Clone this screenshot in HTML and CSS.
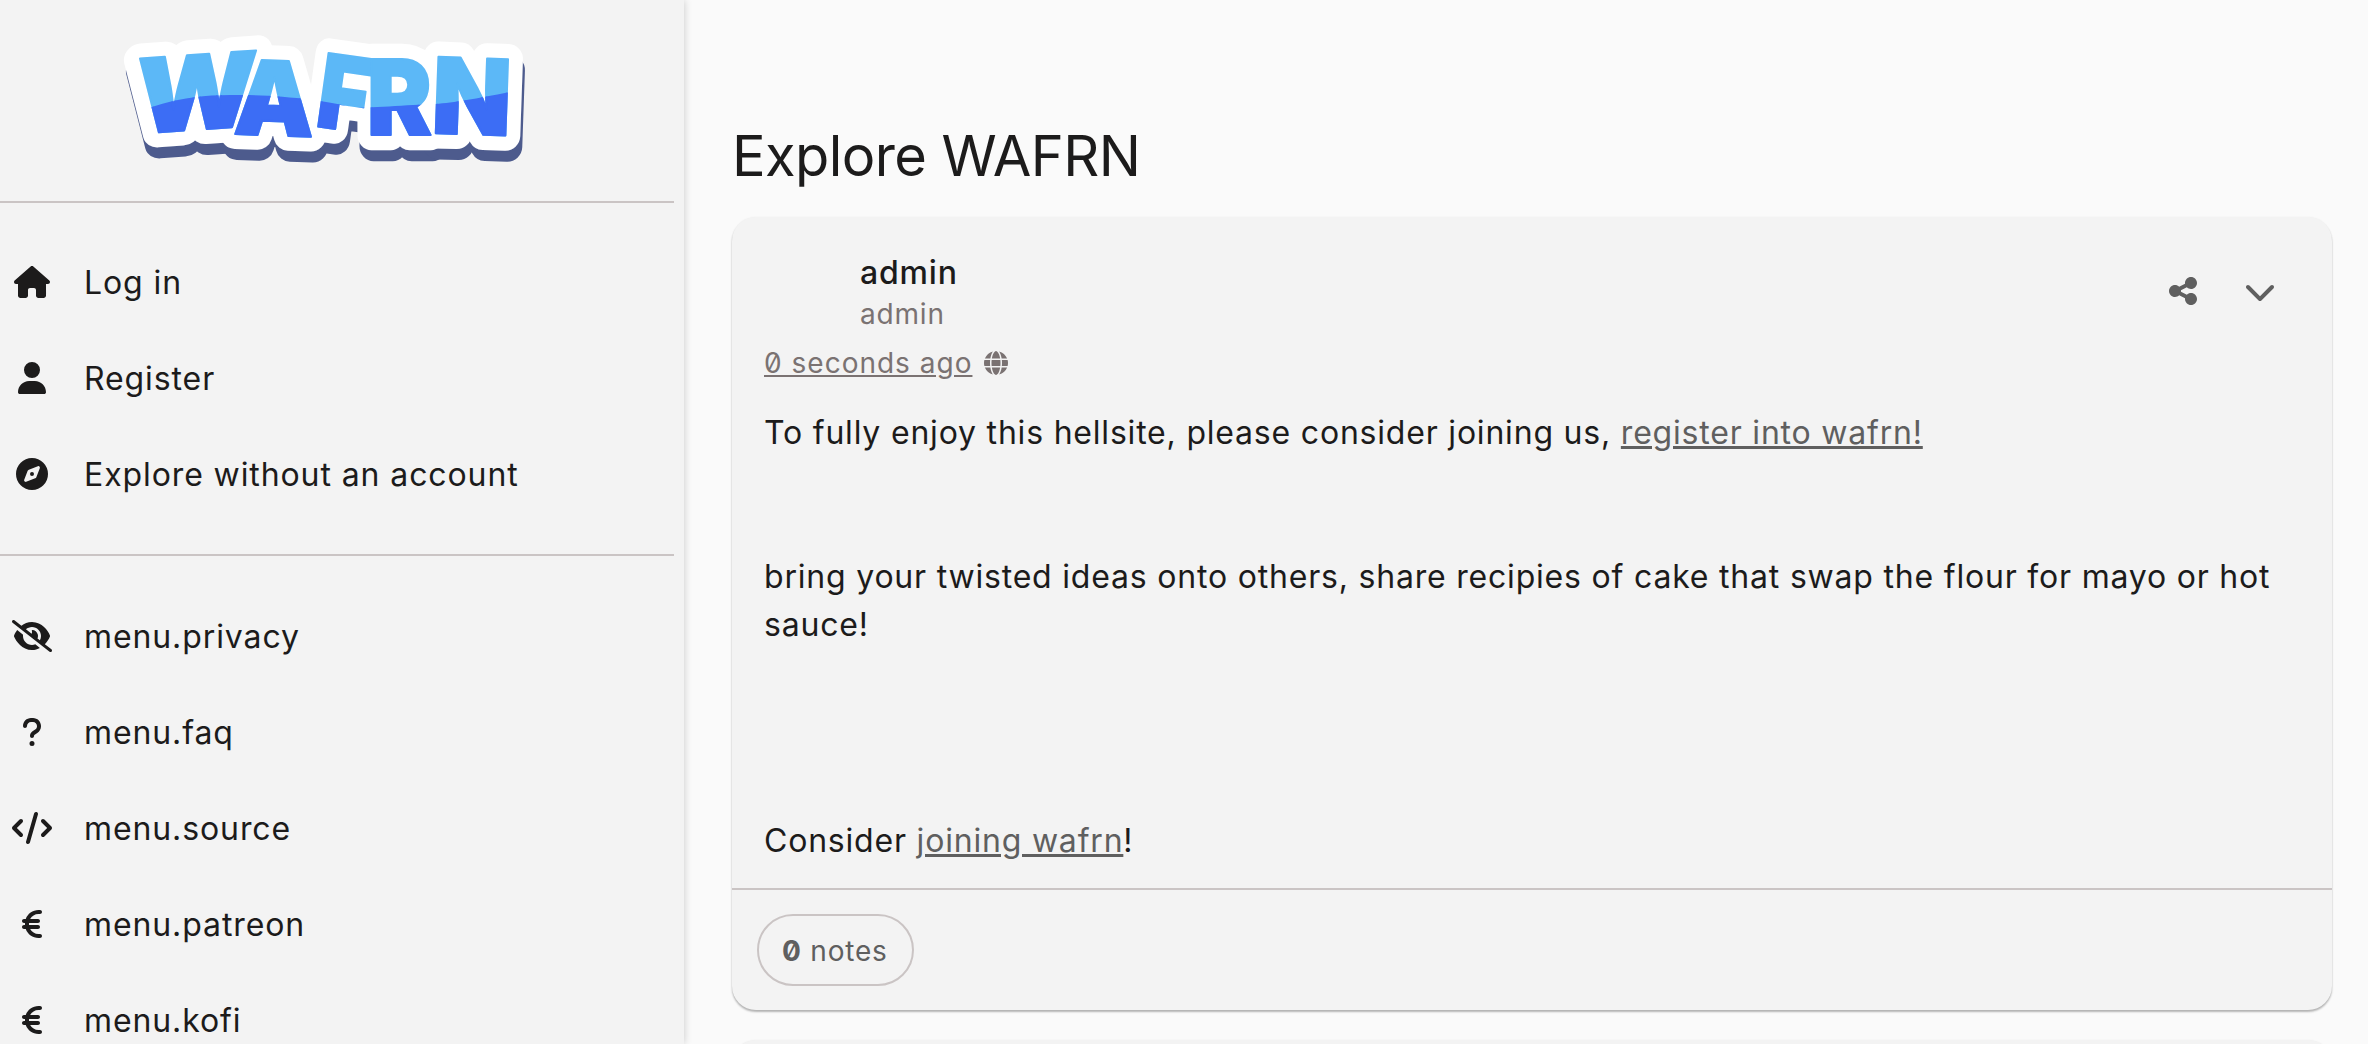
FILE: index.html
```html
<!DOCTYPE html>
<html lang="en">
<head>
    <meta charset="UTF-8">
    <title>Explore WAFRN</title>
    <link rel="stylesheet" href="styles.css">
</head>
<body>
    <aside class="sidebar">
        <div class="logo">
            <svg class="logo-art" viewBox="0 0 430 150" width="430" height="150" role="img" aria-label="WAFRN">
                <defs>
                    <g id="logoLetters">
                        <text transform="translate(25 114) rotate(-4) skewX(-6) scale(1.12 1.03)">W</text>
                        <text transform="translate(123 114) rotate(2) scale(1.01 1.03)">A</text>
                        <text transform="translate(204 106) rotate(8) scale(.88 1.02)">F</text>
                        <text transform="translate(257 115) scale(.97 1.05)">R</text>
                        <text transform="translate(321 113) rotate(2) scale(1.03 1.05)">N</text>
                    </g>
                    <clipPath id="logoWave">
                        <path d="M0 106 C30 88 70 75 120 75 C160 74 220 80 243 88 C255 88 300 85 325 84 C350 82 375 77 430 66 V150 H0 Z"/>
                    </clipPath>
                </defs>
                <use href="#logoLetters" class="logo-shadow" transform="translate(2 11)"/>
                <use href="#logoLetters" class="logo-outline"/>
                <use href="#logoLetters" class="logo-light"/>
                <g clip-path="url(#logoWave)">
                    <use href="#logoLetters" class="logo-dark"/>
                </g>
            </svg>
        </div>

        <nav class="nav-group">
            <a class="nav-item">
                <span class="nav-icon"><svg class="icon" viewBox="0 0 576 512"><path d="M575.8 255.5c0 18-15 32.1-32 32.1h-32l.7 160.2c0 2.7-.2 5.4-.5 8.1V472c0 22.1-17.9 40-40 40H456c-1.1 0-2.2 0-3.3-.1c-1.4 .1-2.8 .1-4.2 .1H416 392c-22.1 0-40-17.9-40-40V448 384c0-17.7-14.3-32-32-32H256c-17.7 0-32 14.3-32 32v64 24c0 22.1-17.9 40-40 40H160 128.1c-1.5 0-3-.1-4.5-.2c-1.2 .1-2.4 .2-3.6 .2H104c-22.1 0-40-17.9-40-40V360c0-.9 0-1.9 .1-2.8V287.6H32c-18 0-32-14-32-32.1c0-9 3-17 10-24L266.4 8c7-7 15-8 22-8s15 2 21 7L564.8 231.5c8 7 12 15 11 24z"/></svg></span>
                <span>Log in</span>
            </a>
            <a class="nav-item">
                <span class="nav-icon"><svg class="icon" viewBox="0 0 448 512"><path d="M224 256A128 128 0 1 0 224 0a128 128 0 1 0 0 256zm-45.7 48C79.8 304 0 383.8 0 482.3C0 498.7 13.3 512 29.7 512H418.3c16.4 0 29.7-13.3 29.7-29.7C448 383.8 368.2 304 269.7 304H178.3z"/></svg></span>
                <span>Register</span>
            </a>
            <a class="nav-item">
                <span class="nav-icon"><svg class="icon" viewBox="0 0 512 512"><path d="M256 512A256 256 0 1 0 256 0a256 256 0 1 0 0 512zm50.7-186.9L162.4 380.6c-19.4 7.5-38.5-11.6-31-31l55.5-144.3c3.3-8.5 9.9-15.1 18.4-18.4l144.3-55.5c19.4-7.5 38.5 11.6 31 31L325.1 306.7c-3.2 8.5-9.9 15.1-18.4 18.4zM288 256a32 32 0 1 0 -64 0 32 32 0 1 0 64 0z"/></svg></span>
                <span>Explore without an account</span>
            </a>
        </nav>

        <nav class="nav-group">
            <a class="nav-item">
                <span class="nav-icon"><svg class="icon" viewBox="0 0 640 512"><path d="M38.8 5.1C28.4-3.1 13.3-1.2 5.1 9.2S-1.2 34.7 9.2 42.9l592 464c10.4 8.2 25.5 6.3 33.7-4.1s6.3-25.5-4.1-33.7L525.6 386.7c39.6-40.6 66.4-86.1 79.9-118.4c3.3-7.9 3.3-16.7 0-24.6c-14.9-35.7-46.2-87.7-93-131.1C465.5 68.8 400.8 32 320 32c-68.2 0-125 26.3-169.3 60.8L38.8 5.1zM223.1 149.5C248.6 126.2 282.7 112 320 112c79.5 0 144 64.5 144 144c0 24.9-6.3 48.3-17.4 68.7L408 294.5c8.4-19.3 10.6-41.4 4.8-63.3c-11.1-41.5-47.8-69.4-88.6-71.1c-5.8-.2-9.2 6.1-7.4 11.7c2.1 6.4 3.3 13.2 3.3 20.3c0 10.2-2.4 19.8-6.6 28.3l-90.3-70.8zM373 389.9c-16.4 6.5-34.3 10.1-53 10.1c-79.5 0-144-64.5-144-144c0-6.9 .5-13.6 1.4-20.2L83.1 161.5C60.3 191.2 44 220.8 34.5 243.7c-3.3 7.9-3.3 16.7 0 24.6c14.9 35.7 46.2 87.7 93 131.1C174.5 443.2 239.2 480 320 480c47.8 0 89.9-12.9 126.2-32.5L373 389.9z"/></svg></span>
                <span>menu.privacy</span>
            </a>
            <a class="nav-item">
                <span class="nav-icon"><svg class="icon" viewBox="0 0 320 512"><path d="M80 160c0-35.3 28.7-64 64-64h32c35.3 0 64 28.7 64 64v3.6c0 21.8-11.1 42.1-29.4 53.8l-42.2 27.1c-25.2 16.2-40.4 44.1-40.4 74V320c0 17.7 14.3 32 32 32s32-14.3 32-32v-1.4c0-8.2 4.2-15.8 11-20.2l42.2-27.1c36.6-23.6 58.8-64.1 58.8-107.7V160c0-70.7-57.3-128-128-128H144C73.3 32 16 89.3 16 160c0 17.7 14.3 32 32 32s32-14.3 32-32zm80 320a40 40 0 1 0 0-80 40 40 0 1 0 0 80z"/></svg></span>
                <span>menu.faq</span>
            </a>
            <a class="nav-item">
                <span class="nav-icon"><svg class="icon" viewBox="0 0 640 512"><path d="M392.8 1.2c-17-4.9-34.7 5-39.6 22l-128 448c-4.9 17 5 34.7 22 39.6s34.7-5 39.6-22l128-448c4.9-17-5-34.7-22-39.6zm80.6 120.1c-12.5 12.5-12.5 32.8 0 45.3L562.7 256l-89.4 89.4c-12.5 12.5-12.5 32.8 0 45.3s32.8 12.5 45.3 0l112-112c12.5-12.5 12.5-32.8 0-45.3l-112-112c-12.5-12.5-32.8-12.5-45.3 0zm-306.7 0c-12.5-12.5-32.8-12.5-45.3 0l-112 112c-12.5 12.5-12.5 32.8 0 45.3l112 112c12.5 12.5 32.8 12.5 45.3 0s12.5-32.8 0-45.3L77.3 256l89.4-89.4c12.5-12.5 12.5-32.8 0-45.3z"/></svg></span>
                <span>menu.source</span>
            </a>
            <a class="nav-item">
                <span class="nav-icon"><svg class="icon" viewBox="0 0 320 512"><path d="M48.1 240c-.1 2.7-.1 5.3-.1 8v16c0 2.7 0 5.3 .1 8H32c-17.7 0-32 14.3-32 32s14.3 32 32 32H60.3C89.9 419.9 170 480 264 480h24c17.7 0 32-14.3 32-32s-14.3-32-32-32H264c-57.9 0-108.2-32.4-133.9-80H256c17.7 0 32-14.3 32-32s-14.3-32-32-32H112.2c-.1-2.6-.2-5.3-.2-8V248c0-2.7 .1-5.4 .2-8H256c17.7 0 32-14.3 32-32s-14.3-32-32-32H130.1c25.7-47.6 76-80 133.9-80h24c17.7 0 32-14.3 32-32s-14.3-32-32-32H264C170 32 89.9 92.1 60.3 176H32c-17.7 0-32 14.3-32 32s14.3 32 32 32H48.1z"/></svg></span>
                <span>menu.patreon</span>
            </a>
            <a class="nav-item">
                <span class="nav-icon"><svg class="icon" viewBox="0 0 320 512"><path d="M48.1 240c-.1 2.7-.1 5.3-.1 8v16c0 2.7 0 5.3 .1 8H32c-17.7 0-32 14.3-32 32s14.3 32 32 32H60.3C89.9 419.9 170 480 264 480h24c17.7 0 32-14.3 32-32s-14.3-32-32-32H264c-57.9 0-108.2-32.4-133.9-80H256c17.7 0 32-14.3 32-32s-14.3-32-32-32H112.2c-.1-2.6-.2-5.3-.2-8V248c0-2.7 .1-5.4 .2-8H256c17.7 0 32-14.3 32-32s-14.3-32-32-32H130.1c25.7-47.6 76-80 133.9-80h24c17.7 0 32-14.3 32-32s-14.3-32-32-32H264C170 32 89.9 92.1 60.3 176H32c-17.7 0-32 14.3-32 32s14.3 32 32 32H48.1z"/></svg></span>
                <span>menu.kofi</span>
            </a>
        </nav>
    </aside>

    <main class="content">
        <h1 class="page-title">Explore WAFRN</h1>

        <article class="post">
            <header class="post-header">
                <div class="post-author">
                    <div class="author-name">admin</div>
                    <div class="author-handle">admin</div>
                </div>
                <div class="post-actions">
                    <svg class="action-icon" viewBox="0 0 448 512"><path d="M352 224c53 0 96-43 96-96s-43-96-96-96s-96 43-96 96c0 4 .2 8 .7 11.9l-94.1 47C145.4 170.2 121.9 160 96 160c-53 0-96 43-96 96s43 96 96 96c25.9 0 49.4-10.2 66.6-26.9l94.1 47c-.5 3.9-.7 7.8-.7 11.9c0 53 43 96 96 96s96-43 96-96s-43-96-96-96c-25.9 0-49.4 10.2-66.6 26.9l-94.1-47c.5-3.9 .7-7.8 .7-11.9s-.2-8-.7-11.9l94.1-47C302.6 213.8 326.1 224 352 224z"/></svg>
                    <svg class="action-icon" viewBox="0 0 512 512"><path d="M233.4 406.6c12.5 12.5 32.8 12.5 45.3 0l192-192c12.5-12.5 12.5-32.8 0-45.3s-32.8-12.5-45.3 0L256 338.7 86.6 169.4c-12.5-12.5-32.8-12.5-45.3 0s-12.5 32.8 0 45.3l192 192z"/></svg>
                </div>
            </header>

            <div class="post-time">
                <a class="time-link">0 seconds ago</a>
                <svg class="globe-icon" viewBox="0 0 512 512"><path d="M352 256c0 22.2-1.2 43.6-3.3 64H163.3c-2.2-20.4-3.3-41.8-3.3-64s1.2-43.6 3.3-64H348.7c2.2 20.4 3.3 41.8 3.3 64zm28.8-64H503.9c5.3 20.5 8.1 41.9 8.1 64s-2.8 43.5-8.1 64H380.8c2.1-20.6 3.2-42 3.2-64s-1.1-43.4-3.2-64zm112.6-32H376.7c-10-63.9-29.8-117.4-55.3-151.6c78.3 20.7 142 77.5 171.9 151.6zm-149.1 0H167.7c6.1-36.4 15.5-68.6 27-94.7c10.5-23.6 22.2-40.7 33.5-51.5C239.4 3.2 248.7 0 256 0s16.6 3.2 27.8 13.8c11.3 10.8 23 27.9 33.5 51.5c11.6 26 20.9 58.2 27 94.7zm-209 0H18.6C48.6 85.9 112.2 29.1 190.6 8.4C165.1 42.6 145.3 96.1 135.3 160zM8.1 192H131.2c-2.1 20.6-3.2 42-3.2 64s1.1 43.4 3.2 64H8.1C2.8 299.5 0 278.1 0 256s2.8-43.5 8.1-64zM194.7 446.6c-11.6-26-20.9-58.2-27-94.6H344.3c-6.1 36.4-15.5 68.6-27 94.6c-10.5 23.6-22.2 40.7-33.5 51.5C272.6 508.8 263.3 512 256 512s-16.6-3.2-27.8-13.8c-11.3-10.8-23-27.9-33.5-51.5zM135.3 352c10 63.9 29.8 117.4 55.3 151.6C112.2 482.9 48.6 426.1 18.6 352H135.3zm358.1 0c-30 74.1-93.6 130.9-171.9 151.6c25.5-34.2 45.2-87.7 55.3-151.6H493.4z"/></svg>
            </div>

            <div class="post-body">
                <p>To fully enjoy this hellsite, please consider joining us, <a>register into wafrn!</a></p>
                <p class="gap-small">bring your twisted ideas onto others, share recipies of cake that swap the flour for mayo or hot sauce!</p>
                <p class="gap-large">Consider <a>joining wafrn</a>!</p>
            </div>

            <footer class="post-footer">
                <button class="notes-pill" type="button"><b>0</b> notes</button>
            </footer>
        </article>

        <article class="post post-next"></article>
    </main>
</body>
</html>
```

FILE: styles.css
```css
html, body {
    height: 100%;
}
body {
    margin: 0;
    display: flex;
    overflow: hidden;
    font-family: Inter, "Noto Sans", sans-serif;
    font-feature-settings: "zero";
    font-size: 32px;
    letter-spacing: 0.8px;
    color: #1c1b1b;
    background-color: #fafafa;
}

/* sidebar */
.sidebar {
    flex: 0 0 684px;
    height: 100%;
    overflow: hidden;
    background-color: #f3f3f3;
    box-shadow: 0 0 8px rgba(0, 0, 0, 0.2);
    position: relative;
}
.logo {
    height: 201px;
    padding-left: 110px;
    padding-top: 20px;
    box-sizing: border-box;
}
.logo-art {
    display: block;
    overflow: visible;
}
.logo-art text {
    font-family: Inter, sans-serif;
    font-size: 100px;
    font-weight: 900;
    letter-spacing: 0;
    stroke-linejoin: round;
}
.logo-shadow {
    fill: #4d5b8d;
    stroke: #4d5b8d;
    stroke-width: 29px;
}
.logo-outline {
    fill: #ffffff;
    stroke: #ffffff;
    stroke-width: 29px;
}
.logo-light {
    fill: #5cb8f7;
    stroke: #5cb8f7;
    stroke-width: 2px;
}
.logo-dark {
    fill: #3c6df5;
    stroke: #3c6df5;
    stroke-width: 2px;
}
.nav-group {
    width: 674px;
    padding: 31px 0 32px;
    border-top: 2px solid #cac4c4;
    letter-spacing: 0.9px;
}
.nav-group + .nav-group {
    padding-top: 32px;
}
.nav-item {
    display: flex;
    align-items: center;
    height: 96px;
    padding-left: 12px;
    gap: 32px;
}
.nav-icon {
    flex: 0 0 40px;
    display: flex;
    justify-content: center;
}
.icon {
    height: 32px;
    fill: #1c1b1b;
    display: block;
}

/* main column */
.content {
    flex: 1;
    min-width: 0;
    padding: 0 36px 0 48px;
}
.page-title {
    margin: 0;
    height: 217px;
    padding-top: 121px;
    box-sizing: border-box;
    font-size: 56px;
    line-height: 70px;
    font-weight: 400;
    letter-spacing: -0.6px;
}
.post {
    background-color: #f3f3f3;
    border-radius: 24px;
    box-shadow: 0 2px 2px rgba(0, 0, 0, 0.28), 0 0 2px rgba(0, 0, 0, 0.05);
}
.post-next {
    margin-top: 30px;
    height: 200px;
}
.post-header {
    display: flex;
    justify-content: space-between;
    padding: 36px 56px 0 128px;
}
.author-name {
    font-weight: 500;
    line-height: 40px;
}
.author-handle {
    margin-top: 1px;
    font-size: 28px;
    line-height: 40px;
    color: #7a7272;
}
.post-actions {
    display: flex;
    gap: 47px;
    padding-top: 22px;
}
.action-icon {
    height: 32px;
    fill: #5f5f5f;
    display: block;
}
.post-time {
    display: flex;
    align-items: center;
    gap: 12px;
    margin-top: 9px;
    padding-left: 32px;
    font-size: 28px;
    line-height: 40px;
    letter-spacing: 1px;
    color: #7a7272;
}
.time-link {
    text-decoration: underline;
}
.globe-icon {
    height: 24px;
    fill: #7a7272;
}
.post-body {
    padding: 26px 32px 23px;
    line-height: 48px;
}
.post-body p {
    margin: 0;
}
.post-body a {
    color: #5f5f5f;
    text-decoration: underline;
}
.post-body .gap-small {
    margin-top: 96px;
}
.post-body .gap-large {
    margin-top: 168px;
}
.post-footer {
    padding: 24px 25px;
    border-top: 2px solid #cac4c4;
}
.notes-pill {
    display: block;
    height: 72px;
    padding: 2px 24px 0 23px;
    border: 2px solid #cac4c4;
    border-radius: 36px;
    background: transparent;
    font-family: inherit;
    font-feature-settings: inherit;
    font-size: 28px;
    letter-spacing: 0.8px;
    color: #5f5f5f;
}
```
